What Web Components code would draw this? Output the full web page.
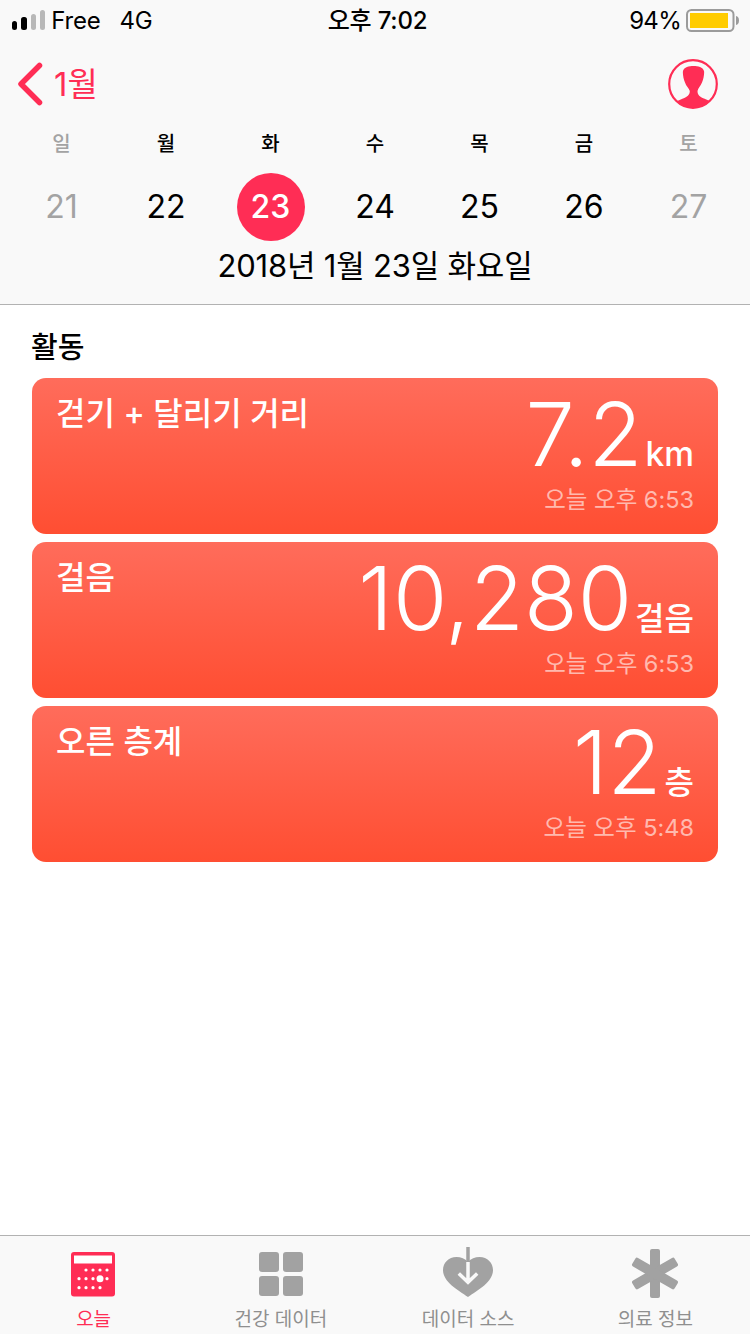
<!DOCTYPE html>
<html lang="ko">
<head>
<meta charset="utf-8">
<title>건강</title>
<style>
  html, body { margin: 0; padding: 0; background: #fff; }
  body { width: 750px; height: 1334px; overflow: hidden; font-family: Inter, "Noto Sans CJK KR", sans-serif; }
  health-app { height: 1334px; }
</style>
</head>
<body>
<health-app></health-app>

<script>
const PINK = "#ff2d55";
const KR = 'Inter, "Noto Sans CJK KR", sans-serif';

class StatusBar extends HTMLElement {
  constructor() {
    super();
    this.attachShadow({ mode: "open" });
    this.shadowRoot.innerHTML = `
      <style>
        :host { display: grid; grid-template-columns: 1fr auto 1fr; align-items: center; height: 40px; padding: 0 11px 0 12px; font: 400 24px/38px ${KR}; color: #000; letter-spacing: -0.2px; }
        .left, .right { display: flex; align-items: center; }
        .right { justify-content: flex-end; }
        .bars { display: flex; align-items: flex-end; gap: 4px; margin-right: 6px; }
        .bars i { display: block; width: 5.300px; border-radius: 2.500px; background: #b8b8b8; }
        .bars i:nth-child(-n+2) { background: #000; }
        .txt { padding-top: 2px; }
        .net { margin-left: 19px; }
        .pct { letter-spacing: -0.700px; }
        .time { font-weight: 500; margin-left: 4px; }
        svg { display: block; margin-left: 5px; }
      </style>
      <div class="left">
        <div class="bars"><i style="height:9px"></i><i style="height:13px"></i><i style="height:16px"></i><i style="height:20px"></i></div>
        <span class="txt">Free</span><span class="txt net">4G</span>
      </div>
      <div class="time txt">오후 7:02</div>
      <div class="right">
        <span class="txt pct">94%</span>
        <svg width="53" height="24" viewBox="0 0 53 24">
          <rect x="1" y="2" width="46.500" height="21" rx="4.500" fill="none" stroke="#9b9b9b" stroke-width="2"/>
          <rect x="4" y="5" width="38" height="15" fill="#ffcc00"/>
          <path d="M50 8c2 .4 3 2 3 4.500s-1 4.100-3 4.500z" fill="#9b9b9b"/>
        </svg>
      </div>`;
  }
}

class NavRow extends HTMLElement {
  constructor() {
    super();
    this.attachShadow({ mode: "open" });
    this.shadowRoot.innerHTML = `
      <style>
        :host { display: flex; align-items: center; justify-content: space-between; height: 88px; padding: 0 31px 0 18px; color: ${PINK}; font: 400 33px/1 ${KR}; }
        .back { display: flex; align-items: center; gap: 11px; }
        svg { display: block; }
      </style>
      <div class="back">
        <svg width="25" height="44" viewBox="0 0 25 44"><path d="M21.500 3.500 3 22l18.500 18.500" fill="none" stroke="${PINK}" stroke-width="5.500" stroke-linecap="round" stroke-linejoin="round"/></svg>
        <span>1월</span>
      </div>
      <svg width="52" height="52" viewBox="0 0 52 52">
        <defs><clipPath id="c"><circle cx="26" cy="26" r="24"/></clipPath></defs>
        <circle cx="26" cy="26" r="23.800" fill="none" stroke="${PINK}" stroke-width="2.200"/>
        <path clip-path="url(#c)" d="M26.500 8C31 8 36 9 37 13c.5 3-.5 8-2 11.500-1.500 3.500-4 5.500-4.500 8.500 0 4 2.500 6 6.500 7.500l8 3.500v8H8v-8l8-3.500c4-1.500 6.800-3.500 6.800-7.500-.8-3-3.800-5-4.800-8.500-1.500-3.500-2.500-8.500-2-11.500 1-4 6-5 10.500-5z" fill="${PINK}"/>
      </svg>`;
  }
}

class WeekStrip extends HTMLElement {
  constructor() {
    super();
    this.attachShadow({ mode: "open" });
    const days = [["일", 21], ["월", 22], ["화", 23], ["수", 24], ["목", 25], ["금", 26], ["토", 27]];
    const cells = days.map(([name, num], i) => {
      const cls = (i === 0 || i === 6 ? "off" : "") + (i === 2 ? " sel" : "");
      return `<div class="cell ${cls}"><div class="name">${name}</div><div class="num"><span>${num}</span></div></div>`;
    }).join("");
    this.shadowRoot.innerHTML = `
      <style>
        :host { display: grid; grid-template-columns: repeat(7, 104.500px); justify-content: center; font-family: ${KR}; color: #000; }
        .cell { display: flex; flex-direction: column; align-items: center; }
        .name { font-size: 20px; font-weight: 500; line-height: 24px; height: 24px; }
        .num { width: 68px; height: 68px; margin-top: 17px; border-radius: 50%; display: flex; align-items: center; justify-content: center; font-size: 32px; line-height: 1; }
        .off { color: #a3a3a3; }
        .sel .num { background: ${PINK}; color: #fff; font-weight: 500; }
      </style>
      ${cells}`;
  }
}

class CalendarHeader extends HTMLElement {
  constructor() {
    super();
    this.attachShadow({ mode: "open" });
    this.shadowRoot.innerHTML = `
      <style>
        :host { display: block; height: 304px; background: #f9f9f9; border-bottom: 1px solid #b2b2b2; }
        .date { text-align: center; font: 400 31px/44px ${KR}; letter-spacing: -0.200px; color: #000; margin-top: 3px; }
        week-strip { margin-top: 4px; }
      </style>
      <status-bar></status-bar>
      <nav-row></nav-row>
      <week-strip></week-strip>
      <div class="date">2018년 1월 23일 화요일</div>`;
  }
}

class ActivityCard extends HTMLElement {
  constructor() {
    super();
    this.attachShadow({ mode: "open" });
    this.shadowRoot.innerHTML = `
      <style>
        :host { display: block; height: 156px; border-radius: 14px; background: linear-gradient(#ff6c5b, #ff4e32); color: #fff; font-family: ${KR}; }
        .wrap { display: grid; grid-template-columns: auto 1fr; height: 100%; padding: 0 24px; box-sizing: border-box; }
        .title { font-size: 32px; font-weight: 500; line-height: 40px; margin-top: 16px; }
        .right { display: flex; flex-direction: column; align-items: flex-end; }
        .reading { display: flex; align-items: baseline; gap: 3px; height: 100px; }
        .value { font-size: 88px; font-weight: 300; line-height: 112px; }
        .unit { font-size: 32px; font-weight: 500; }
        .time { font-size: 23.500px; line-height: 30px; color: rgba(255,255,255,.6); margin-top: 7px; }
      </style>
      <div class="wrap">
        <div class="title"><slot name="title"></slot></div>
        <div class="right">
          <div class="reading"><span class="value"><slot name="value"></slot></span><span class="unit"><slot name="unit"></slot></span></div>
          <div class="time"><slot name="time"></slot></div>
        </div>
      </div>`;
  }
}

class ActivityList extends HTMLElement {
  constructor() {
    super();
    this.attachShadow({ mode: "open" });
    this.shadowRoot.innerHTML = `
      <style>
        :host { display: flex; flex-direction: column; padding: 21px 32px 0; font-family: ${KR}; }
        h2 { margin: 0 0 8px -1px; font-size: 29px; font-weight: 500; line-height: 44px; height: 44px; color: #000; }
        .cards { display: flex; flex-direction: column; gap: 8px; }
      </style>
      <h2>활동</h2>
      <div class="cards">
        <activity-card><span slot="title">걷기 + 달리기 거리</span><span slot="value">7.2</span><span slot="unit" style="font-size:33.500px">km</span><span slot="time">오늘 오후 6:53</span></activity-card>
        <activity-card><span slot="title">걸음</span><span slot="value">10,280</span><span slot="unit">걸음</span><span slot="time">오늘 오후 6:53</span></activity-card>
        <activity-card><span slot="title">오른 층계</span><span slot="value">12</span><span slot="unit">층</span><span slot="time">오늘 오후 5:48</span></activity-card>
      </div>`;
  }
}

const dots = [[15,24],[22,24],[29,24],[36,24],[8,32.700],[15,32.700],[22,32.700],[36,32.700],[8,41.700],[15,41.700],[22,41.700],[29,41.700]];
const TAB_ICONS = {
  today: `<svg style="margin-right:1px" width="44" height="52" viewBox="0 0 44 52"><rect y="6" width="44" height="44.500" rx="3" fill="${PINK}"/><rect x="3" y="9.500" width="38" height="8" fill="#fff"/>
    <g fill="#fff">${dots.map(([x,y]) => `<circle cx="${x}" cy="${y}" r="1.600"/>`).join("")}<circle cx="29" cy="32.700" r="3.500"/></g></svg>`,
  data: `<svg width="44" height="52" viewBox="0 0 44 52"><g fill="#a2a2a2"><rect y="6" width="20" height="20" rx="3"/><rect x="24" y="6" width="20" height="20" rx="3"/><rect y="30" width="20" height="20" rx="3"/><rect x="24" y="30" width="20" height="20" rx="3"/></g></svg>`,
  source: `<svg width="50" height="52" viewBox="0 0 50 52"><path d="M25 16c-3-3.500-7-5-11.500-5C5.500 11 0 17 0 24c0 12 15 20 25 27 10-7 25-15 25-27 0-7-5.500-13-13.500-13C32 11 28 12.500 25 16z" fill="#a2a2a2"/><path d="M25 1v16" stroke="#a2a2a2" stroke-width="3.500"/><path d="M25 16v20M15.800 27.500 25 36.300l9.200-8.800" fill="none" stroke="#f9f9f9" stroke-width="3.500"/></svg>`,
  medical: `<svg width="50" height="52" viewBox="0 0 50 52"><g fill="#a2a2a2"><rect x="20" y="3" width="10" height="49" rx="2"/><rect x="20" y="3" width="10" height="49" rx="2" transform="rotate(60 25 27.500)"/><rect x="20" y="3" width="10" height="49" rx="2" transform="rotate(120 25 27.500)"/></g></svg>`
};

class TabItem extends HTMLElement {
  constructor() {
    super();
    this.attachShadow({ mode: "open" });
  }

  connectedCallback() {
    const active = this.hasAttribute("active");
    this.shadowRoot.innerHTML = `
      <style>
        :host { display: flex; flex-direction: column; align-items: center; font: 400 19px/24px ${KR}; color: ${active ? PINK : "#8f8f8f"}; }
        .icon { height: 52px; margin-top: 10px; display: flex; align-items: flex-end; }
        svg { display: block; }
        .label { margin-top: 10px; }
      </style>
      <div class="icon">${TAB_ICONS[this.getAttribute("icon")]}</div>
      <div class="label"><slot></slot></div>`;
  }
}

class TabBar extends HTMLElement {
  constructor() {
    super();
    this.attachShadow({ mode: "open" });
    this.shadowRoot.innerHTML = `
      <style>
        :host { display: grid; grid-template-columns: repeat(4, 1fr); height: 98px; padding-right: 1px; background: #f9f9f9; border-top: 1px solid #b2b2b2; overflow: hidden; }
      </style>
      <tab-item icon="today" active>오늘</tab-item>
      <tab-item icon="data">건강 데이터</tab-item>
      <tab-item icon="source">데이터 소스</tab-item>
      <tab-item icon="medical">의료 정보</tab-item>`;
  }
}

class HealthApp extends HTMLElement {
  constructor() {
    super();
    this.attachShadow({ mode: "open" });
    this.shadowRoot.innerHTML = `
      <style>
        :host { display: flex; flex-direction: column; width: 750px; }
        .main { flex: 1; }
      </style>
      <calendar-header></calendar-header>
      <activity-list class="main"></activity-list>
      <tab-bar></tab-bar>`;
  }
}

customElements.define("status-bar", StatusBar);
customElements.define("nav-row", NavRow);
customElements.define("week-strip", WeekStrip);
customElements.define("calendar-header", CalendarHeader);
customElements.define("activity-card", ActivityCard);
customElements.define("activity-list", ActivityList);
customElements.define("tab-item", TabItem);
customElements.define("tab-bar", TabBar);
customElements.define("health-app", HealthApp);
</script>
</body>
</html>
